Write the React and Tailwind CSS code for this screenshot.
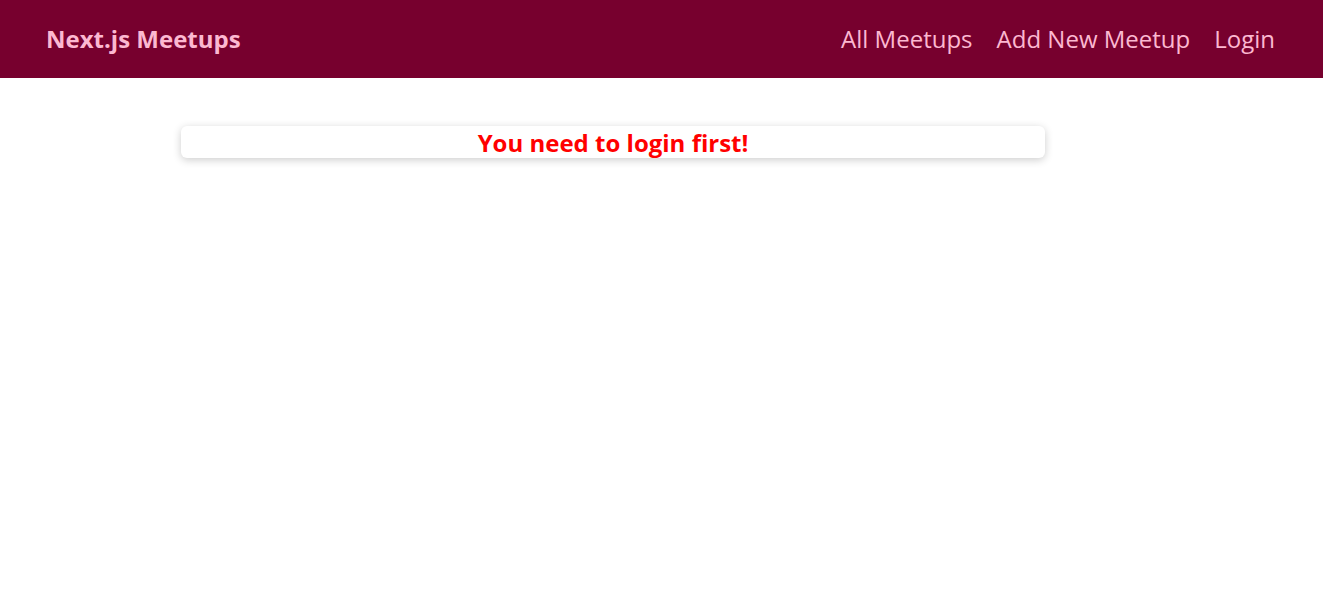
export default function App() {
  return (
    <div className="min-h-[598px] bg-white" style={{ fontFamily: '"Open Sans", sans-serif' }}>
      <header className="h-[78px] bg-[#77002e] flex items-center justify-between pl-[46px] pr-[48px]">
        <div className="text-[24px] font-bold text-[#fcb8d1]">Next.js Meetups</div>
        <nav>
          <ul className="flex items-center gap-[24px] text-[24px] text-[#fcb8d1]">
            <li>All Meetups</li>
            <li>Add New Meetup</li>
            <li>Login</li>
          </ul>
        </nav>
      </header>
      <main className="pt-[48px] pl-[181px]">
        <div className="w-[864px] h-[32px] bg-white rounded-[6px] shadow-[0_2px_8px_rgba(0,0,0,0.2)] flex items-center justify-center pt-[2px]">
          <h2 className="text-[24px] font-bold text-[#ff0000] leading-none">You need to login first!</h2>
        </div>
      </main>
    </div>
  );
}
